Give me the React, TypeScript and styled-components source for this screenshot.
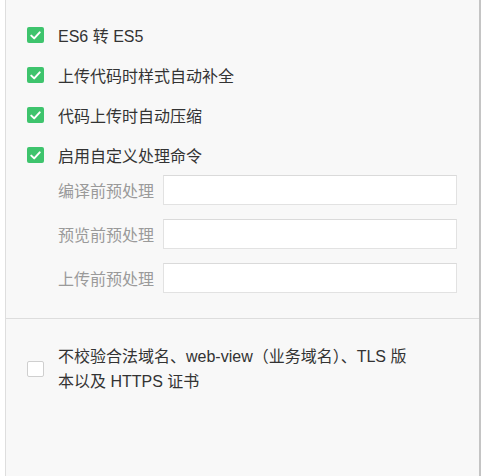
import React from "react";
import styled, { createGlobalStyle } from "styled-components";

const Global = createGlobalStyle`
  html, body { margin: 0; padding: 0; background: #ffffff; }
  body { font-family: "Liberation Sans", "Noto Sans CJK SC", sans-serif; }
`;

const Panel = styled.div`
  box-sizing: border-box;
  margin-left: 5px;
  width: 476px;
  height: 476px;
  background: #f8f8f8;
  border-left: 1px solid #dedede;
  border-right: 2px solid #c4c4c4;
  display: flex;
  flex-direction: column;
`;

const Section = styled.div<{ $top: number; $bottom: number }>`
  padding: ${(p) => p.$top}px 22px ${(p) => p.$bottom}px 21px;
  display: flex;
  flex-direction: column;
`;

const Divider = styled.div`
  height: 1px;
  background: #dddddd;
`;

const Row = styled.label<{ $h?: number }>`
  display: flex;
  align-items: center;
  gap: 14px;
  min-height: ${(p) => p.$h ?? 40}px;
  font-size: 16px;
  color: #333333;
`;

const Box = styled.span<{ $on: boolean }>`
  flex: none;
  box-sizing: border-box;
  width: 17px;
  height: 16px;
  border-radius: 2px;
  display: flex;
  align-items: center;
  justify-content: center;
  background: ${(p) => (p.$on ? "#3ec46d" : "#ffffff")};
  border: ${(p) => (p.$on ? "none" : "1px solid #cfcfcf")};
`;

const LongText = styled.span`
  width: 364px;
  line-height: 25px;
`;

const Fields = styled.div`
  display: flex;
  flex-direction: column;
  gap: 14px;
  padding-left: 31px;
`;

const Field = styled.div`
  display: flex;
  align-items: center;
`;

const FieldLabel = styled.span`
  width: 105px;
  font-size: 16px;
  color: #9a9a9a;
`;

const Input = styled.input`
  box-sizing: border-box;
  flex: 1;
  height: 30px;
  border: 1px solid #e2e2e2;
  border-top-color: #dadada;
  background: #ffffff;
  outline: none;
  margin: 0;
  padding: 0 8px;
`;

const Check = () => (
  <svg width="11" height="9" viewBox="0 0 11 9">
    <path d="M1.3 4.6 L4.2 7.4 L9.7 1.4" fill="none" stroke="#fff" strokeWidth="2" strokeLinecap="round" strokeLinejoin="round" />
  </svg>
);

const opts = ["ES6 转 ES5", "上传代码时样式自动补全", "代码上传时自动压缩", "启用自定义处理命令"];
const fields = ["编译前预处理", "预览前预处理", "上传前预处理"];

export default function App() {
  return (
    <>
      <Global />
      <Panel>
        <Section $top={15} $bottom={25}>
          {opts.map((o) => (
            <Row key={o}>
              <Box $on>
                <Check />
              </Box>
              <span>{o}</span>
            </Row>
          ))}
          <Fields>
            {fields.map((f) => (
              <Field key={f}>
                <FieldLabel>{f}</FieldLabel>
                <Input />
              </Field>
            ))}
          </Fields>
        </Section>
        <Divider />
        <Section $top={25} $bottom={0}>
          <Row $h={50}>
            <Box $on={false} />
            <LongText>不校验合法域名、web-view（业务域名）、TLS 版本以及 HTTPS 证书</LongText>
          </Row>
        </Section>
      </Panel>
    </>
  );
}
